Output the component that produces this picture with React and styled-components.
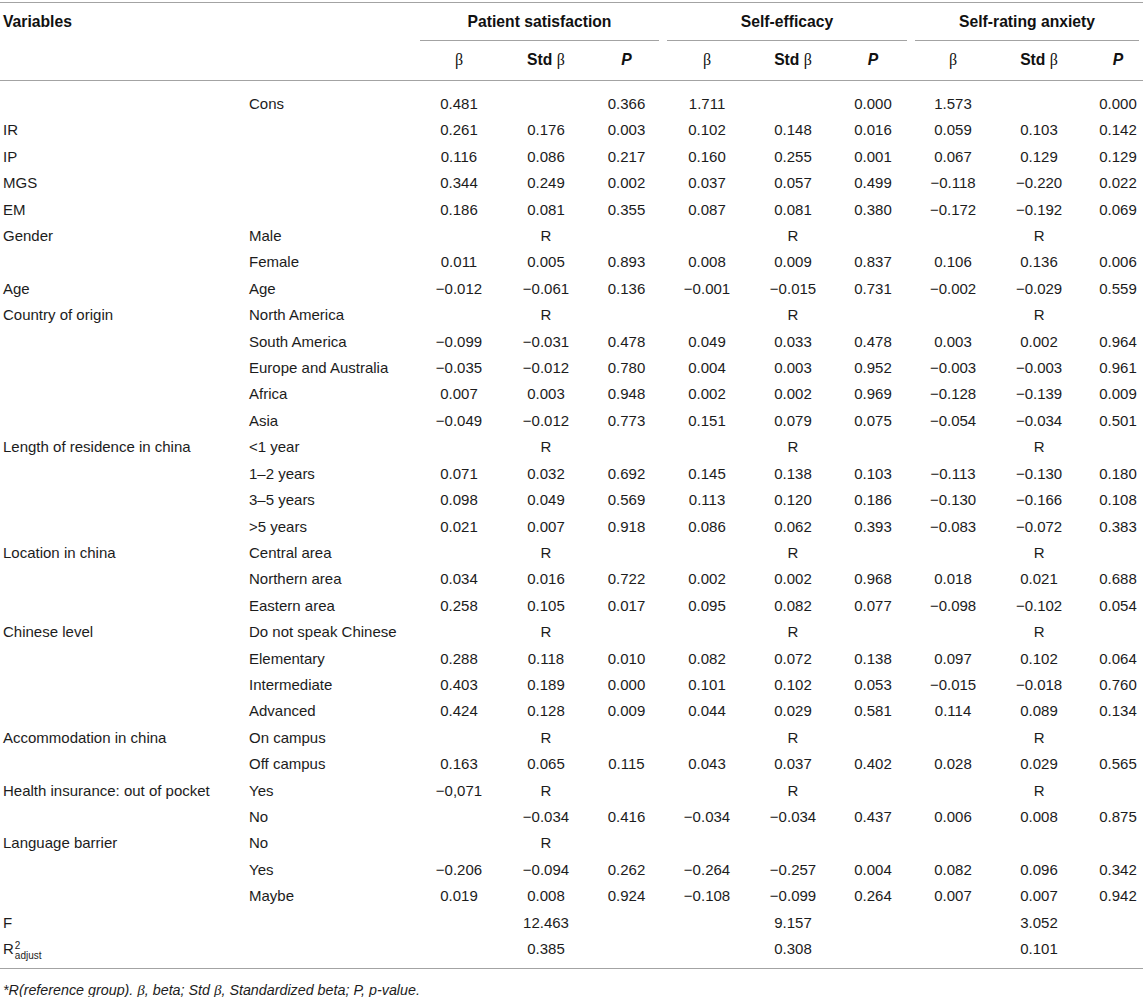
import styled, { createGlobalStyle } from "styled-components";

const GlobalStyle = createGlobalStyle`
  html, body {
    margin: 0;
    padding: 0;
    background: #ffffff;
  }
  body {
    font-family: "Liberation Sans", Arial, Helvetica, sans-serif;
    color: #1c1c1c;
  }
`;

const COLS = [245, 171, 86, 88, 73, 88, 84, 76, 84, 88, 60];

const GROUPS = ["Patient satisfaction", "Self-efficacy", "Self-rating anxiety"];

const M = "\u2212";

const ROWS = [
  ["", "Cons", ["0.481", "", "0.366", "1.711", "", "0.000", "1.573", "", "0.000"]],
  ["IR", "", ["0.261", "0.176", "0.003", "0.102", "0.148", "0.016", "0.059", "0.103", "0.142"]],
  ["IP", "", ["0.116", "0.086", "0.217", "0.160", "0.255", "0.001", "0.067", "0.129", "0.129"]],
  ["MGS", "", ["0.344", "0.249", "0.002", "0.037", "0.057", "0.499", M + "0.118", M + "0.220", "0.022"]],
  ["EM", "", ["0.186", "0.081", "0.355", "0.087", "0.081", "0.380", M + "0.172", M + "0.192", "0.069"]],
  ["Gender", "Male", ["", "R", "", "", "R", "", "", "R", ""]],
  ["", "Female", ["0.011", "0.005", "0.893", "0.008", "0.009", "0.837", "0.106", "0.136", "0.006"]],
  ["Age", "Age", [M + "0.012", M + "0.061", "0.136", M + "0.001", M + "0.015", "0.731", M + "0.002", M + "0.029", "0.559"]],
  ["Country of origin", "North America", ["", "R", "", "", "R", "", "", "R", ""]],
  ["", "South America", [M + "0.099", M + "0.031", "0.478", "0.049", "0.033", "0.478", "0.003", "0.002", "0.964"]],
  ["", "Europe and Australia", [M + "0.035", M + "0.012", "0.780", "0.004", "0.003", "0.952", M + "0.003", M + "0.003", "0.961"]],
  ["", "Africa", ["0.007", "0.003", "0.948", "0.002", "0.002", "0.969", M + "0.128", M + "0.139", "0.009"]],
  ["", "Asia", [M + "0.049", M + "0.012", "0.773", "0.151", "0.079", "0.075", M + "0.054", M + "0.034", "0.501"]],
  ["Length of residence in china", "<1 year", ["", "R", "", "", "R", "", "", "R", ""]],
  ["", "1\u20132 years", ["0.071", "0.032", "0.692", "0.145", "0.138", "0.103", M + "0.113", M + "0.130", "0.180"]],
  ["", "3\u20135 years", ["0.098", "0.049", "0.569", "0.113", "0.120", "0.186", M + "0.130", M + "0.166", "0.108"]],
  ["", ">5 years", ["0.021", "0.007", "0.918", "0.086", "0.062", "0.393", M + "0.083", M + "0.072", "0.383"]],
  ["Location in china", "Central area", ["", "R", "", "", "R", "", "", "R", ""]],
  ["", "Northern area", ["0.034", "0.016", "0.722", "0.002", "0.002", "0.968", "0.018", "0.021", "0.688"]],
  ["", "Eastern area", ["0.258", "0.105", "0.017", "0.095", "0.082", "0.077", M + "0.098", M + "0.102", "0.054"]],
  ["Chinese level", "Do not speak Chinese", ["", "R", "", "", "R", "", "", "R", ""]],
  ["", "Elementary", ["0.288", "0.118", "0.010", "0.082", "0.072", "0.138", "0.097", "0.102", "0.064"]],
  ["", "Intermediate", ["0.403", "0.189", "0.000", "0.101", "0.102", "0.053", M + "0.015", M + "0.018", "0.760"]],
  ["", "Advanced", ["0.424", "0.128", "0.009", "0.044", "0.029", "0.581", "0.114", "0.089", "0.134"]],
  ["Accommodation in china", "On campus", ["", "R", "", "", "R", "", "", "R", ""]],
  ["", "Off campus", ["0.163", "0.065", "0.115", "0.043", "0.037", "0.402", "0.028", "0.029", "0.565"]],
  ["Health insurance: out of pocket", "Yes", [M + "0,071", "R", "", "", "R", "", "", "R", ""]],
  ["", "No", ["", M + "0.034", "0.416", M + "0.034", M + "0.034", "0.437", "0.006", "0.008", "0.875"]],
  ["Language barrier", "No", ["", "R", "", "", "", "", "", "", ""]],
  ["", "Yes", [M + "0.206", M + "0.094", "0.262", M + "0.264", M + "0.257", "0.004", "0.082", "0.096", "0.342"]],
  ["", "Maybe", ["0.019", "0.008", "0.924", M + "0.108", M + "0.099", "0.264", "0.007", "0.007", "0.942"]],
  ["F", "", ["", "12.463", "", "", "9.157", "", "", "3.052", ""]],
  ["R2", "", ["", "0.385", "", "", "0.308", "", "", "0.101", ""]],
];

const Page = styled.div`
  padding-top: 2px;
  width: 1143px;
  overflow: hidden;
`;

const Table = styled.table`
  width: 1143px;
  table-layout: fixed;
  border-collapse: collapse;
  font-size: 15px;
  border-top: 1px solid #a3a3a3;
  border-bottom: 1px solid #a3a3a3;
`;

const Col = styled.col`
  width: ${(p) => p.$w}px;
`;

const HeadRow = styled.tr`
  height: ${(p) => p.$h}px;
  border-bottom: ${(p) => (p.$rule ? "1px solid #a3a3a3" : "none")};
`;

const Th = styled.th`
  padding: 0 0 ${(p) => p.$pb || 0}px ${(p) => p.$pl || 0}px;
  text-align: ${(p) => p.$align || "center"};
  vertical-align: bottom;
  font-weight: 700;
  font-size: 15.7px;
  line-height: 18px;
  color: #111;
`;

const GroupLabel = styled.div`
  margin: 0 4px;
  padding-bottom: 9px;
  border-bottom: 1px solid #a3a3a3;
`;

const Greek = styled.span`
  font-family: "Liberation Serif", "DejaVu Serif", serif;
  font-weight: 400;
  font-style: ${(p) => (p.$italic ? "italic" : "normal")};
  font-size: ${(p) => (p.$small ? "15px" : "16px")};
`;

const Pee = styled.span`
  font-style: italic;
`;

const Td = styled.td`
  padding: ${(p) => (p.$first ? 10 : 0)}px 0 ${(p) => (p.$last ? 6 : 0)}px
    ${(p) => p.$pl || 0}px;
  height: 26.4px;
  line-height: 26.4px;
  text-align: ${(p) => p.$align || "center"};
  vertical-align: bottom;
  white-space: nowrap;
`;

const Stack = styled.span`
  display: inline-flex;
  flex-direction: column;
  vertical-align: 5px;
  font-size: 10px;
  line-height: 10px;
  margin-left: 1px;
`;

const Footnote = styled.p`
  margin: 13px 0 0 3px;
  font-size: 14.3px;
  line-height: 17px;
  font-style: italic;
  color: #1c1c1c;
`;

const RAdjust = () => (
  <>
    R
    <Stack>
      <span>2</span>
      <span>adjust</span>
    </Stack>
  </>
);

const valuePad = (i) => (i === 8 ? 10 : 0);

export default function App() {
  return (
    <Page>
      <GlobalStyle />
      <Table>
        <colgroup>
          {COLS.map((w, i) => (
            <Col key={i} $w={w} />
          ))}
        </colgroup>
        <thead>
          <HeadRow $h={38}>
            <Th colSpan={2} $align="left" $pl={3} $pb={10}>
              Variables
            </Th>
            {GROUPS.map((g) => (
              <Th key={g} colSpan={3}>
                <GroupLabel>{g}</GroupLabel>
              </Th>
            ))}
          </HeadRow>
          <HeadRow $h={40} $rule>
            <Th />
            <Th />
            {GROUPS.map((g) =>
              [0, 1, 2].map((k) => (
                <Th key={g + k} $pb={11} $pl={g === GROUPS[2] && k === 2 ? 10 : 0}>
                  {k === 0 && <Greek>β</Greek>}
                  {k === 1 && (
                    <>
                      Std <Greek>β</Greek>
                    </>
                  )}
                  {k === 2 && <Pee>P</Pee>}
                </Th>
              ))
            )}
          </HeadRow>
        </thead>
        <tbody>
          {ROWS.map(([a, b, vals], r) => {
            const first = r === 0;
            const last = r === ROWS.length - 1;
            return (
              <tr key={r}>
                <Td $align="left" $pl={3} $first={first} $last={last}>
                  {a === "R2" ? <RAdjust /> : a}
                </Td>
                <Td $align="left" $pl={4} $first={first} $last={last}>
                  {b}
                </Td>
                {vals.map((v, i) => (
                  <Td key={i} $pl={valuePad(i)} $first={first} $last={last}>
                    {v}
                  </Td>
                ))}
              </tr>
            );
          })}
        </tbody>
      </Table>
      <Footnote>
        *R(reference group). <Greek $italic $small>β</Greek>, beta; Std{" "}
        <Greek $italic $small>β</Greek>, Standardized beta; <i>P</i>, p-value.
      </Footnote>
    </Page>
  );
}
